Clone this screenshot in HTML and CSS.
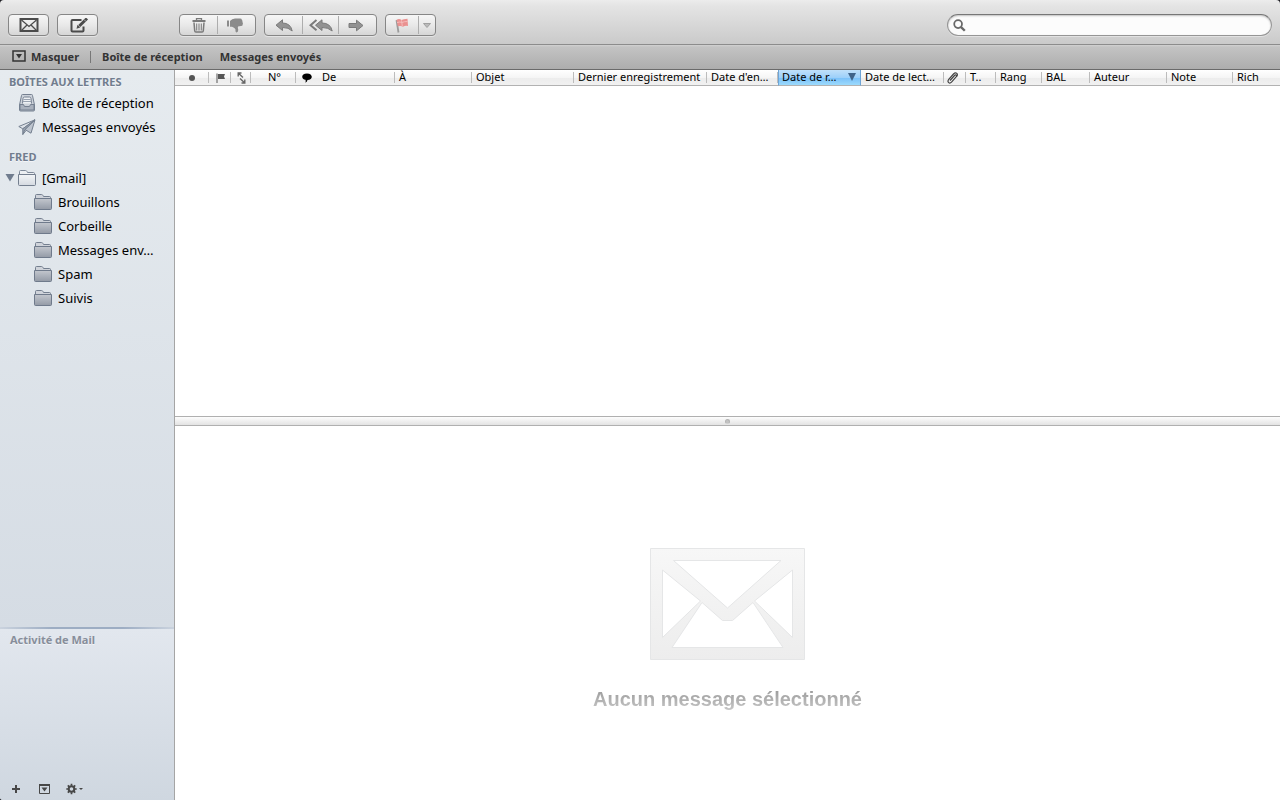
FILE: index.html
```html
<!DOCTYPE html>
<html lang="fr">
<head>
<meta charset="utf-8">
<title>Mail</title>
<link rel="stylesheet" href="styles.css">
</head>
<body>
<svg width="0" height="0" class="defs" aria-hidden="true">
  <defs>
    <linearGradient id="folderFill" x1="0" y1="0" x2="0" y2="1"><stop offset="0" stop-color="#c3c7ce"/><stop offset="1" stop-color="#939aa6"/></linearGradient>
    <linearGradient id="lightFill" x1="0" y1="0" x2="0" y2="1"><stop offset="0" stop-color="#f3f5f7"/><stop offset="1" stop-color="#d5dae1"/></linearGradient>
    <linearGradient id="letterFill" x1="0" y1="0" x2="0" y2="1"><stop offset="0" stop-color="#f7f7f7"/><stop offset="1" stop-color="#ededed"/></linearGradient>
    <symbol id="folder" viewBox="0 0 18 16">
      <path d="M1.500 4V1.500q0-1 1-1h5q1 0 1.500 1l.5 1h6q1 0 1 1V5" fill="#cfd3da" stroke="#747f8f"/>
      <path d="M.5 4.500h17v10q0 1-1 1h-15q-1 0-1-1z" fill="url(#folderFill)" stroke="#6f7a8b"/>
    </symbol>
    <symbol id="menubox" viewBox="0 0 14 12">
      <path d="M1 1h12v10H1z" fill="none" stroke="currentColor" stroke-width="1.500"/>
      <path d="M4 4h6L7 8.500z" fill="currentColor"/>
    </symbol>
  </defs>
</svg>
<div class="window">
  <header class="toolbar">
    <button class="btn" type="button" aria-label="Relever">
      <svg width="20" height="14" viewBox="0 0 20 14" fill="none" stroke="#4b4b4b"><path d="M1.500 1h17v12h-17z" stroke-width="2"/><path d="M2.500 2l7.500 6.500L17.500 2M2.500 12.500l5.500-5.500M17.500 12.500L12 7" stroke-width="1.300"/></svg>
    </button>
    <button class="btn" type="button" aria-label="Nouveau message">
      <svg class="compose" width="20" height="15" viewBox="0 0 20 15" fill="none" stroke="#4b4b4b"><path d="M11.500 2h-9q-1 0-1 1v9.500q0 1 1 1h10q1 0 1-1V8.500" stroke-width="2"/><path d="M6.500 10.800l1-4 2.800 2.800z" fill="#4b4b4b" stroke="none"/><path d="M9.300 8l7.700-7.500" stroke-width="3"/><path d="M14 1.500l2 2" stroke="#ddd" stroke-width="0.700"/></svg>
    </button>
    <div class="group group-first">
      <button class="seg seg-37" type="button" aria-label="Supprimer">
        <svg width="14" height="15" viewBox="0 0 14 15" fill="none" stroke="#7a7a7a"><path d="M4.500 2V.7h5V2" stroke-width="1.300"/><path d="M.5 3h13" stroke-width="1.800"/><path d="M2 4.500l.7 8.300q.1 1.200 1.200 1.200h6.200q1.100 0 1.200-1.200l.7-8.300" stroke-width="1.500"/><path d="M4.700 5.500v7M7 5.500v7M9.300 5.500v7"/></svg>
      </button>
      <button class="seg seg-38" type="button" aria-label="Indésirable">
        <svg class="junk" width="16" height="15" viewBox="0 0 16 15" fill="#8b8b8b"><path d="M0 2.500h2v6H0zM3 3Q5 .5 8 .5h5q2 0 1.800 1.500 1 .7.600 1.900.9 1 .3 2.300.2 1.800-1.700 1.900l-3 .3q-.4 1.300.2 3.200.2 2.600-1.700 2.900-1.300-.4-1-3Q8 9.700 5 8.700H3z"/></svg>
      </button>
    </div>
    <div class="group">
      <button class="seg seg-37" type="button" aria-label="Répondre">
        <svg width="18" height="13" viewBox="0 0 18 13" fill="#929292" stroke="#7a7a7a"><path d="M7.500.8v3.200q8 0 9.700 8Q13.500 8.300 7.500 8.500v3L1 6.200z"/></svg>
      </button>
      <button class="seg seg-36" type="button" aria-label="Répondre à tous">
        <svg width="24" height="13" viewBox="0 0 24 13" fill="#929292" stroke="#7a7a7a"><path d="M13 .8v3.200q8.500 0 10.200 8Q19 8.300 13 8.500v3L6.500 6.200z"/><path d="M7.500 1L1.500 6.200l6 5" fill="none" stroke-width="2"/></svg>
      </button>
      <button class="seg seg-38" type="button" aria-label="Réexpédier">
        <svg class="forward" width="16" height="13" viewBox="0 0 16 13" fill="#929292" stroke="#7a7a7a"><path d="M1 4.500h7.500V1.200l6.500 5.300-6.500 5.300V8.500H1z"/></svg>
      </button>
    </div>
    <div class="group">
      <button class="seg seg-flag" type="button" aria-label="Signaler">
        <svg width="14" height="15" viewBox="0 0 14 15"><path d="M1.500 2l2 12.500" stroke="#9b9b9b" stroke-width="1.800"/><path d="M1.500 2q2.500-2 5 0Q8.500 1 12.500.8L13 8q-3-.5-5 .8-2-1.500-5.200-.5z" fill="#ea9190"/><path d="M6.500 2.200l.8 6M2 4.500q3-1 5 0 2-1 5.500-1" stroke="#f5bcbb" fill="none"/></svg>
      </button>
      <button class="seg seg-menu" type="button" aria-label="Choisir un drapeau">
        <svg width="8" height="5" viewBox="0 0 8 5"><path d="M.5.5h7L4 4.500z" fill="#bbb" stroke="#a0a0a0"/></svg>
      </button>
    </div>
    <label class="search">
      <svg width="13" height="13" viewBox="0 0 14 14" fill="none" stroke="#686868"><circle cx="5.500" cy="5.500" r="4.200" stroke-width="1.900"/><path d="M8.700 8.700l4 4" stroke-width="2.500"/></svg>
      <input type="search" aria-label="Rechercher">
    </label>
  </header>
  <nav class="favorites">
    <button class="fav fav-hide" type="button"><svg width="14" height="12"><use href="#menubox"/></svg>Masquer</button>
    <span class="fav-sep"></span>
    <button class="fav" type="button">Boîte de réception</button>
    <button class="fav" type="button">Messages envoyés</button>
  </nav>
  <div class="body">
    <aside class="sidebar">
      <div class="mailboxes">
        <h2>BOÎTES AUX LETTRES</h2>
        <ul>
          <li><svg width="18" height="18" viewBox="0 0 18 18"><path d="M3.500 1.500q0-1 1-1h9q1 0 1 1l2 9.500v5q0 1-1 1h-13q-1 0-1-1v-5z" fill="#ccd2da" stroke="#758090"/><path d="M4.500 9.500l.5-5q.2-1.500 1.500-1.500h5q1.300 0 1.500 1.500l.5 5" fill="#eef1f4" stroke="#758090"/><path d="M5.500 5.500h7M5 7.500h8" stroke="#98a2b0"/><path d="M2 10.500h3.500l1 2h5l1-2H16V16H2z" fill="#a9b1bd" stroke="#758090"/></svg><span>Boîte de réception</span></li>
          <li><svg width="18" height="17" viewBox="0 0 18 17" stroke="#758090" stroke-linejoin="round"><path d="M17 .8L.8 7.500l4 2.300z" fill="#dce1e7"/><path d="M17 .8L7 10.500l6 3.700z" fill="#bdc4ce"/><path d="M17 .8L4.800 9.800v5.700L7 10.500z" fill="#97a1af"/><path d="M4.800 15.500l3.500-4.300" fill="none"/></svg><span>Messages envoyés</span></li>
        </ul>
        <h2 class="next">FRED</h2>
        <ul>
          <li class="account"><svg width="10" height="8" viewBox="0 0 10 8"><path d="M.5 0h9L5 7.500z" fill="#707c8e"/></svg><svg width="18" height="16" viewBox="0 0 18 16"><path d="M1.500 4V1.500q0-1 1-1h5q1 0 1.500 1l.5 1h6q1 0 1 1V5" fill="#eceff2" stroke="#7e8999"/><path d="M.5 4.500h17v10q0 1-1 1h-15q-1 0-1-1z" fill="url(#lightFill)" stroke="#747f8f"/></svg><span>[Gmail]</span></li>
          <li class="child"><svg width="18" height="16"><use href="#folder"/></svg><span>Brouillons</span></li>
          <li class="child"><svg width="18" height="16"><use href="#folder"/></svg><span>Corbeille</span></li>
          <li class="child"><svg width="18" height="16"><use href="#folder"/></svg><span>Messages env…</span></li>
          <li class="child"><svg width="18" height="16"><use href="#folder"/></svg><span>Spam</span></li>
          <li class="child"><svg width="18" height="16"><use href="#folder"/></svg><span>Suivis</span></li>
        </ul>
      </div>
      <div class="activity">
        <h3>Activité de Mail</h3>
        <div class="actions">
          <button type="button" aria-label="Ajouter"><svg width="10" height="10" viewBox="0 0 10 10"><path d="M5 1v8M1 5h8" stroke="currentColor" stroke-width="2"/></svg></button>
          <button type="button" aria-label="Afficher l’activité"><svg width="11" height="10" viewBox="0 0 11 10"><path d="M.5.5h10v9H.5z" fill="none" stroke="currentColor"/><path d="M0 0h11v2H0zM2.500 3.500h6l-3 4z" fill="currentColor"/></svg></button>
          <button type="button" aria-label="Actions"><svg width="17" height="12" viewBox="0 0 17 12"><g stroke="currentColor" fill="none"><circle cx="5.500" cy="6" r="2.800" stroke-width="2"/><path d="M5.500.8v2M5.500 9.200v2M.3 6h2M8.700 6h2M1.800 2.300l1.500 1.500M7.700 8.200l1.500 1.500M1.800 9.700l1.500-1.500M7.700 3.800l1.500-1.500" stroke-width="1.700"/></g><path d="M13 5h4l-2 2z" fill="currentColor"/></svg></button>
        </div>
      </div>
    </aside>
    <main class="content">
      <section class="messages">
        <table>
          <colgroup>
            <col class="w34"><col class="w22"><col class="w20"><col class="w45"><col class="w22"><col class="w77"><col class="w77"><col class="w102"><col class="w133"><col class="w71"><col class="w83"><col class="w83"><col class="w22"><col class="w30"><col class="w46"><col class="w48"><col class="w77"><col class="w66"><col>
          </colgroup>
          <thead>
            <tr>
              <th class="ico" aria-label="Lu"><svg width="6" height="6" viewBox="0 0 6 6"><circle cx="3" cy="3" r="3" fill="#555"/></svg></th>
              <th class="ico" aria-label="Drapeau"><svg width="9" height="10" viewBox="0 0 9 10"><path d="M1 .5V10" stroke="#888" stroke-width="1.500"/><path d="M2 1h7L8 3.500 9 6H2z" fill="#555"/></svg></th>
              <th class="ico" aria-label="Réponse"><svg width="9" height="12" viewBox="0 0 9 12" fill="none" stroke="#666" stroke-width="1.400"><path d="M4.500 1H1.200v3.500M1.200 1L6 5.500M4.500 11h3.300V7.500M7.800 11L3 6.500"/></svg></th>
              <th class="ico-text">N°</th>
              <th class="ico plain" aria-label="Conversation"><svg width="10" height="10" viewBox="0 0 10 10"><path d="M5 .5c6.300 0 6.300 6.500.5 6.500Q5.200 9 3.200 9.800 4 8.500 3.500 6.800C-1.200 6-1 .5 5 .5z" fill="#000"/></svg></th>
              <th>De</th>
              <th>À</th>
              <th>Objet</th>
              <th>Dernier enregistrement</th>
              <th>Date d'en…</th>
              <th class="sorted" aria-sort="descending"><div><span>Date de r…</span><svg width="8" height="8" viewBox="0 0 8 8"><path d="M0 0h8L4 8z" fill="#3f6389"/></svg></div></th>
              <th>Date de lect…</th>
              <th class="ico clip" aria-label="Pièces jointes"><svg width="11" height="12" viewBox="0 0 11 12" fill="none" stroke="#444" stroke-width="1.200"><path d="M3 8.500l4.500-5q1-1 1.700-.3t-.1 1.700L4.500 10.200q-1.500 1.500-2.800.4T1.500 7.700L6.500 2q1.800-1.800 3.300-.6 1.300 1.500-.3 3.300"/></svg></th>
              <th>T..</th>
              <th>Rang</th>
              <th>BAL</th>
              <th>Auteur</th>
              <th>Note</th>
              <th class="plain">Rich</th>
            </tr>
          </thead>
        </table>
      </section>
      <div class="splitter"><span></span></div>
      <section class="preview">
        <svg width="155" height="112" viewBox="0 0 155 112"><path fill="url(#letterFill)" fill-rule="evenodd" stroke="#e5e6e7" d="M.5.5h154v111H.5zM23.500 12.500h107.500L77.500 60zM12.500 22l38 31-38 36.500zM142.500 22l-38 31 38 36.500zM22 99.500l30-45 20.500 18h10l20.500-18 30 45z"/></svg>
        <p>Aucun message sélectionné</p>
      </section>
    </main>
  </div>
</div>
</body>
</html>
```
FILE: styles.css
```css
* { box-sizing: border-box; }
html, body { height: 100%; }
body {
  margin: 0;
  background: #1d1d22;
  color: #000;
  font-family: "Lucida Grande", "Noto Sans", "Open Sans", sans-serif;
  font-size: 13px;
}
button { font: inherit; color: inherit; background: none; border: 0; padding: 0; margin: 0; }
svg { display: block; flex: none; }
ul { list-style: none; margin: 0; padding: 0; }
.defs { position: absolute; }

.window {
  height: 100vh;
  display: flex;
  flex-direction: column;
  overflow: hidden;
  border-radius: 4px 4px 0 3px;
}

.toolbar {
  display: flex;
  align-items: center;
  gap: 8px;
  padding: 14px 8px 8px;
  border-bottom: 1px solid #8c8c8c;
  background: linear-gradient(#ececec, #e4e4e4 6px, #cacaca);
}
.btn, .group {
  display: flex;
  align-items: center;
  justify-content: center;
  height: 22px;
  border: 1px solid #868686;
  border-radius: 4px;
  background: linear-gradient(#f6f6f6, #e9e9e9 50%, #d6d6d6);
  box-shadow: 0 1px 0 #e4e4e4;
}
.btn { width: 41px; }
.compose { margin-left: 4px; }
.group-first { margin-left: 73px; }
.seg {
  display: flex;
  align-items: center;
  justify-content: center;
  height: 18px;
}
.seg + .seg { border-left: 1px solid #adadad; }
.seg-36 { width: 36px; }
.seg-37 { width: 37px; }
.seg-38 { width: 38px; }
.seg-flag { width: 32px; }
.seg-menu { width: 17px; }
.junk, .forward { margin-right: 3px; }
.search {
  display: flex;
  align-items: center;
  gap: 4px;
  width: 325px;
  height: 22px;
  margin-left: auto;
  padding: 0 8px 0 5px;
  border: 1px solid #959595;
  border-top-color: #777;
  border-radius: 11px;
  background: #fcfcfc;
  box-shadow: inset 0 1px 2px #c0c0c0, 0 1px 0 #e2e2e2;
}
.search input { flex: 1; min-width: 0; border: 0; outline: 0; background: none; font: inherit; }

.favorites {
  display: flex;
  align-items: center;
  height: 25px;
  padding: 0 12px 2px;
  border-bottom: 1px solid #6a6a6a;
  background: linear-gradient(#d2d2d2, #c3c3c3 2px, #adadad);
  color: #333;
  font-size: 11px;
  font-weight: 700;
  text-shadow: 0 1px 0 #dcdcdc;
}
.fav { display: flex; align-items: center; gap: 5px; margin-right: 17px; white-space: nowrap; }
.fav-hide { margin-right: 11px; }
.fav-sep { width: 1px; height: 12px; margin: 2px 11px 0 0; background: #777; }

.body { flex: 1; min-height: 0; display: flex; }

.sidebar {
  width: 175px;
  flex: none;
  display: flex;
  flex-direction: column;
  border-right: 1px solid #a5a5a5;
  background: #d0d8e1;
}
.mailboxes {
  flex: 1;
  padding-top: 3px;
  background: linear-gradient(#e6ebef, #d5dce4);
}
.sidebar h2 {
  margin: 0;
  padding-left: 9px;
  font-size: 11px;
  line-height: 18px;
  color: #717d8e;
  text-shadow: 0 1px 0 #f3f5f8;
}
.sidebar h2.next { margin-top: 9px; }
.sidebar li {
  display: flex;
  align-items: center;
  gap: 6px;
  height: 24px;
  padding-left: 18px;
  white-space: nowrap;
}
.sidebar li.account { gap: 3px; padding-left: 5px; }
.sidebar li.account span { margin-left: 3px; }
.sidebar li.child { padding-left: 34px; }

.activity {
  height: 173px;
  display: flex;
  flex-direction: column;
  justify-content: space-between;
  border-top: 2px solid;
  border-image: linear-gradient(90deg, #ccd4df, #9dadc3 30%, #9dadc3 70%, #ccd4df) 2;
  background: linear-gradient(#e2e7ee, #cfd7e0);
}
.activity h3 {
  margin: 0;
  padding: 3px 10px;
  font-size: 11px;
  line-height: 16px;
  color: #878e9b;
  text-shadow: 0 1px 0 #f1f3f6;
}
.actions { display: flex; align-items: center; gap: 18px; height: 22px; padding-left: 11px; color: #474747; }
.actions button:last-child { margin-left: -2px; }

.content { flex: 1; min-width: 0; display: flex; flex-direction: column; background: #fff; }
.messages { flex: 346 1 0; min-height: 0; overflow: hidden; }
table { width: 100%; table-layout: fixed; border-collapse: separate; border-spacing: 0; }
th {
  height: 16px;
  padding: 0 0 2px 4px;
  white-space: nowrap;
  text-align: left;
  font-size: 11px;
  line-height: 13px;
  font-weight: 400;
  border-bottom: 1px solid #b2b2b2;
  background:
    linear-gradient(#bcbcbc, #bcbcbc) right 2px / 1px 11px no-repeat,
    linear-gradient(#fff, #f5f5f5 50%, #ececec 50%, #f1f1f1);
}
th.plain { background: linear-gradient(#fff, #f5f5f5 50%, #ececec 50%, #f1f1f1); }
th.ico { padding: 0 1px; }
th.ico svg { margin: 0 auto; }
th.clip { padding-right: 6px; }
th.ico-text { padding: 0 0 2px 2px; text-align: center; }
th.sorted {
  padding-left: 3px;
  border-left: 1px solid #6da4d6;
  border-right: 1px solid #6da4d6;
  background: linear-gradient(#c0e0fa, #9dd0fa 50%, #78bff9 50%, #9cdafc);
}
th.sorted div { display: flex; align-items: center; justify-content: space-between; padding-right: 4px; }
.w20 { width: 20px; }
.w22 { width: 22px; }
.w30 { width: 30px; }
.w34 { width: 34px; }
.w45 { width: 45px; }
.w46 { width: 46px; }
.w48 { width: 48px; }
.w66 { width: 66px; }
.w71 { width: 71px; }
.w77 { width: 77px; }
.w83 { width: 83px; }
.w102 { width: 102px; }
.w133 { width: 133px; }

.splitter {
  flex: none;
  display: flex;
  align-items: center;
  justify-content: center;
  height: 10px;
  border-top: 1px solid #b0b0b0;
  border-bottom: 1px solid #b0b0b0;
  background: linear-gradient(#fdfdfd, #e3e3e3);
}
.splitter span { width: 5px; height: 5px; border-radius: 50%; background: #c3c3c3; border: 1px solid #b4b4b4; border-bottom-color: #d0d0d0; }

.preview {
  flex: 374 1 0;
  min-height: 0;
  display: flex;
  flex-direction: column;
  align-items: center;
  justify-content: center;
}
.preview svg { margin-top: 32px; }
.preview p {
  margin: 27px 0 0;
  font: 700 20px/24px "Helvetica Neue", "Liberation Sans", Arial, sans-serif;
  color: transparent;
  background: linear-gradient(#969696, #c8c8c8);
  background-clip: text;
  -webkit-background-clip: text;
}
```
